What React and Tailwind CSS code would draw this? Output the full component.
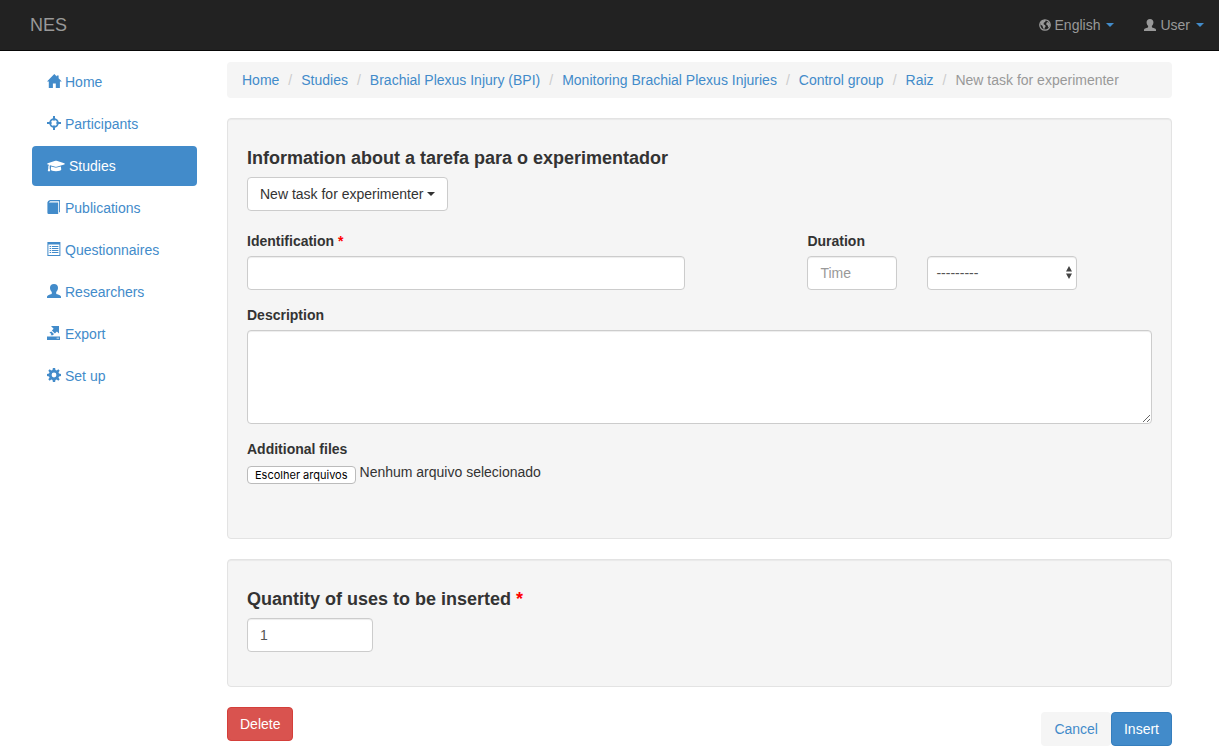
import { FaGraduationCap } from 'react-icons/fa';

const paths = {
  home: <path d="M7.3 0 9.8 2.5V1.4H11.6V4.2L14.8 7.4H12.9V14H8.8V9.5H5.9V14H1.8V7.4H0Z" />,
  screenshot: (
    <>
      <path d="M6 0h2v4.6H6zM6 9.4h2V14H6zM0 6h4.6v2H0zM9.4 6H14v2H9.4z" />
      <circle cx="7" cy="7" r="3.9" fill="none" stroke="currentColor" strokeWidth="1.8" />
    </>
  ),
  book: (
    <path d="M3 0H13V12.2H12.1V1.2H3.2L1.8 2.4H11.2V14H1.6Q0.4 14 0.4 12.8V2.4Q0.6 1 3 0Z" />
  ),
  list: (
    <>
      <path fillRule="evenodd" d="M0.4 0H13.4V14H0.4ZM1.4 2.4V13H12.4V2.4Z" />
      <path d="M2.6 4h1.6v1H2.6zM5 4h6.4v1H5zM2.6 6h1.6v1H2.6zM5 6h6.4v1H5zM2.6 8h1.6v1H2.6zM5 8h6.4v1H5zM2.6 10h1.6v1H2.6zM5 10h6.4v1H5z" />
    </>
  ),
  user: (
    <path d="M7 0C9.6 0 11 1.6 11 3.8C11 5.5 10.4 7 9.2 8V9.2C9.2 9.8 9.6 10 10.4 10.3L12.8 11.2C13.6 11.6 14 12.1 14 12.8V14H0V12.8C0 12.1 0.4 11.6 1.2 11.2L3.6 10.3C4.4 10 4.8 9.8 4.8 9.2V8C3.6 7 3 5.5 3 3.8C3 1.6 4.4 0 7 0Z" />
  ),
  export: (
    <>
      <path fillRule="evenodd" d="M0 10.4H13V14H0ZM9.6 11.8V12.5H12V11.8Z" />
      <path d="M4 0H12V7.6L9.9 5.6 7.9 7.6 4.9 4.6 6.6 2.7Z" />
      <path d="M4.3 5.4 7 8.1 5.8 9.2H3.6L4.4 8 2.4 6.6Z" />
    </>
  ),
  cog: (
    <path
      fillRule="evenodd"
      d="M5.9 0H8.1L8.5 2 9.8 2.5 11.3 1.3 12.7 2.7 11.5 4.2 12 5.5 14 5.9V8.1L12 8.5 11.5 9.8 12.7 11.3 11.3 12.7 9.8 11.5 8.5 12 8.1 14H5.9L5.5 12 4.2 11.5 2.7 12.7 1.3 11.3 2.5 9.8 2 8.5 0 8.1V5.9L2 5.5 2.5 4.2 1.3 2.7 2.7 1.3 4.2 2.5 5.5 2ZM7 4.6A2.4 2.4 0 1 0 7 9.4A2.4 2.4 0 1 0 7 4.6Z"
    />
  ),
  globe: (
    <>
      <circle cx="7" cy="7" r="6.1" fill="none" stroke="currentColor" strokeWidth="1.5" />
      <path d="M2.4 2.6 6.6 1 8 2 7 3.6 5.6 4.4 5.4 6 7.2 7.2 7.8 8.6 6.6 10.4 6.2 12.4 4.8 10.4 4 8 1.6 6.4ZM9.4 3.4 12 4.4 13 7 11.6 10 10.6 9.4 10.2 7.6 8.6 6.6 8.6 5Z" />
    </>
  ),
};

function Icon({ name, className = 'size-3.5' }) {
  return (
    <svg viewBox="0 0 14 14" fill="currentColor" overflow="visible" aria-hidden="true" className={`shrink-0 ${className}`}>
      {paths[name]}
    </svg>
  );
}

function Caret({ className = '' }) {
  return (
    <svg viewBox="0 0 8 4" fill="currentColor" aria-hidden="true" className={`h-1 w-2 shrink-0 ${className}`}>
      <path d="M0 0h8L4 4z" />
    </svg>
  );
}

const menu = [
  ['home', 'Home'],
  ['screenshot', 'Participants'],
  ['cap', 'Studies'],
  ['book', 'Publications'],
  ['list', 'Questionnaires'],
  ['user', 'Researchers'],
  ['export', 'Export'],
  ['cog', 'Set up'],
];

const crumbs = [
  'Home',
  'Studies',
  'Brachial Plexus Injury (BPI)',
  'Monitoring Brachial Plexus Injuries',
  'Control group',
  'Raiz',
];

const field =
  'rounded border border-[#ccc] bg-white text-[#555] shadow-[inset_0_1px_1px_rgba(0,0,0,0.075)] placeholder:text-[#999]';
const well =
  'mt-5 rounded border border-[#e3e3e3] bg-[#f5f5f5] px-[19px] shadow-[inset_0_1px_1px_rgba(0,0,0,0.05)]';

export default function App() {
  return (
    <div className="bg-white font-['Liberation_Sans',Arial,sans-serif] text-sm leading-5 text-[#333]">
      <header className="flex h-[51px] items-center justify-between border-b border-[#080808] bg-[#222] pr-[15px] pl-[30px] text-[#999]">
        <a href="#nes" className="text-lg leading-5">NES</a>
        <nav className="flex gap-[30px]">
          <button type="button" className="flex items-center">
            <Icon name="globe" className="mr-1 size-3" />
            English
            <Caret className="ml-1.5 text-[#428bca]" />
          </button>
          <button type="button" className="flex items-center">
            <Icon name="user" className="mr-1 size-3" />
            User
            <Caret className="ml-1.5 text-[#428bca]" />
          </button>
        </nav>
      </header>

      <div className="pr-[15px]">
        <div className="mx-auto flex max-w-[1170px] pt-[11px] pb-2">
          <nav className="w-1/6 px-[15px]">
            <ul className="flex flex-col gap-0.5">
              {menu.map(([icon, label]) => (
                <li key={label}>
                  <a
                    href={'#' + icon}
                    className={
                      'flex items-center gap-1 rounded px-[15px] py-2.5 ' +
                      (icon === 'cap' ? 'bg-[#428bca] text-white' : 'text-[#428bca]')
                    }
                  >
                    {icon === 'cap' ? (
                      <FaGraduationCap className="h-3.5 w-[18px]" />
                    ) : (
                      <Icon name={icon} className="mb-0.5 size-3.5" />
                    )}
                    {label}
                  </a>
                </li>
              ))}
            </ul>
          </nav>

          <main className="w-5/6 px-[15px]">
            <ol className="flex flex-wrap rounded bg-[#f5f5f5] px-[15px] py-2">
              {crumbs.map((c) => (
                <li key={c} className="text-[#428bca]">
                  <a href="#crumb">{c}</a>
                  <span className="px-[9px] text-[#ccc]">/</span>
                </li>
              ))}
              <li className="text-[#999]">New task for experimenter</li>
            </ol>

            <form onSubmit={(e) => e.preventDefault()}>
              <section className={well + ' pt-[29px] pb-[54px]'}>
                <h4 className="text-lg leading-5 font-bold">Information about a tarefa para o experimentador</h4>
                <button type="button" className="mt-[9px] flex h-[34px] items-center rounded border border-[#ccc] bg-white px-3">
                  New task for experimenter
                  <Caret className="ml-1" />
                </button>

                <div className="mt-5 grid grid-cols-12 gap-x-[30px]">
                  <div className="col-span-6">
                    <label htmlFor="identification" className="mb-[5px] block font-bold">
                      Identification <span className="text-[red]">*</span>
                    </label>
                    <input id="identification" className={field + ' h-[34px] w-full px-3'} />
                  </div>
                  <div className="col-span-5 col-start-8 pl-[15px]">
                    <label htmlFor="duration" className="mb-[5px] block font-bold">Duration</label>
                    <div className="flex gap-[30px]">
                      <input id="duration" placeholder="Time" className={field + ' h-[34px] w-[90px] px-3'} />
                      <div className="relative w-[150px]">
                        <select aria-label="Duration unit" className={field + ' h-[34px] w-full appearance-none px-2'}>
                          <option>---------</option>
                        </select>
                        <svg viewBox="0 0 6 13" fill="#444" aria-hidden="true" className="pointer-events-none absolute top-2.5 right-[5px] h-[13px] w-1.5">
                          <path d="M0 5.5h6L3 0zM0 7.5h6L3 13z" />
                        </svg>
                      </div>
                    </div>
                  </div>
                </div>

                <label htmlFor="description" className="mt-[15px] mb-[5px] block font-bold">Description</label>
                <textarea id="description" className={field + ' block h-[94px] w-full resize-y px-3 py-1.5'} />

                <p className="mt-[15px] font-bold">Additional files</p>
                <div className="mt-[3px] flex gap-1">
                  <label
                    htmlFor="files"
                    className="mt-1 flex h-[18px] items-center rounded border border-[#bbb] bg-white px-[7px] font-[Inter,sans-serif] text-[11px] leading-4 text-black"
                  >
                    Escolher arquivos
                    <input id="files" type="file" multiple className="sr-only" />
                  </label>
                  <span>Nenhum arquivo selecionado</span>
                </div>
              </section>

              <section className={well + ' pt-[29px] pb-[34px]'}>
                <h4 className="text-lg leading-5 font-bold">
                  <label htmlFor="quantity">
                    Quantity of uses to be inserted <span className="text-[red]">*</span>
                  </label>
                </h4>
                <input id="quantity" defaultValue="1" className={field + ' mt-[9px] block h-[34px] w-[126px] px-3'} />
              </section>

              <div className="mt-5 flex items-start justify-between">
                <button type="button" className="h-[34px] rounded border border-[#d43f3a] bg-[#d9534f] px-3 text-white">
                  Delete
                </button>
                <div className="mt-[5px] flex">
                  <a href="#cancel" className="flex h-[34px] items-center rounded bg-[#f5f5f5] px-[13px] text-[#428bca]">
                    Cancel
                  </a>
                  <button type="submit" className="h-[34px] rounded border border-[#357ebd] bg-[#428bca] px-3 text-white">
                    Insert
                  </button>
                </div>
              </div>
            </form>
          </main>
        </div>
      </div>
    </div>
  );
}
